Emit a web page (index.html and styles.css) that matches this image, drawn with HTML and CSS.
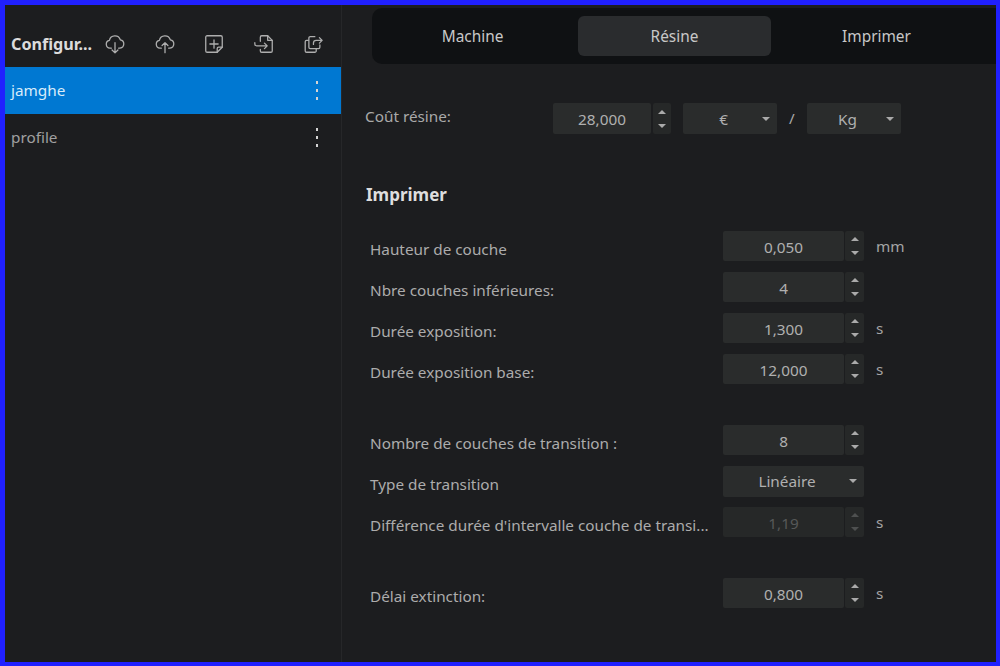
FILE: index.html
```html
<!DOCTYPE html>
<html lang="fr">
<head>
<meta charset="utf-8">
<title>Configuration</title>
<link rel="stylesheet" href="styles.css">
</head>
<body>
<div class="frame">
  <aside class="sidebar">
    <header class="side-head">
      <span class="side-title">Configur...</span>
      <div class="tools">
        <svg class="tool" viewBox="0 0 24 24"><path d="M8 16.500H6.500a4.300 4.300 0 0 1-.6-8.500 6.200 6.200 0 0 1 11.900-.6 4.600 4.600 0 0 1-.3 9.100H16"/><path d="M12 10.500v11M8.800 18.500l3.200 3.200 3.200-3.200"/></svg>
        <svg class="tool" viewBox="0 0 24 24"><path d="M8 16.500H6.500a4.300 4.300 0 0 1-.6-8.500 6.200 6.200 0 0 1 11.900-.6 4.600 4.600 0 0 1-.3 9.100H16"/><path d="M12 21.500v-11M8.800 13.700l3.200-3.200 3.200 3.200"/></svg>
        <svg class="tool" viewBox="0 0 24 24"><path d="M15.500 21H4.500a1.500 1.500 0 0 1-1.500-1.500v-15A1.500 1.500 0 0 1 4.500 3h15A1.500 1.500 0 0 1 21 4.500v11z"/><path d="M15.500 21v-4a1.500 1.500 0 0 1 1.500-1.500h4M12 7.500v9M7.500 12h9"/></svg>
        <svg class="tool" viewBox="0 0 24 24"><path d="M8 9V4.500A1.500 1.500 0 0 1 9.500 3H16l5 5v11.500a1.500 1.500 0 0 1-1.500 1.500h-10A1.500 1.500 0 0 1 8 19.500V18"/><path d="M16 3v5h5"/><path d="M15.500 14H4a2 2 0 0 1-2-2v-1.500M12.500 11l3 3-3 3"/></svg>
        <svg class="tool" viewBox="0 0 24 24"><path d="M7 8H5A1.500 1.500 0 0 0 3.500 9.500v10A1.500 1.500 0 0 0 5 21h9a1.500 1.500 0 0 0 1.500-1.500V17"/><path d="M14 4H9A1.500 1.500 0 0 0 7.500 5.500v10A1.500 1.500 0 0 0 9 17h9a1.500 1.500 0 0 0 1.500-1.500V13"/><path d="M12.500 12.500V11a3 3 0 0 1 3-3H22M19 5l3 3-3 3"/></svg>
      </div>
    </header>
    <ul class="profiles">
      <li class="profile active"><span>jamghe</span><span class="dots"><i></i><i></i><i></i></span></li>
      <li class="profile"><span>profile</span><span class="dots"><i></i><i></i><i></i></span></li>
    </ul>
  </aside>
  <main class="main">
    <nav class="tabs">
      <span class="tab">Machine</span>
      <span class="tab selected">Résine</span>
      <span class="tab">Imprimer</span>
    </nav>
    <section class="cost">
      <span class="cost-label">Coût résine:</span>
      <div class="spin cost-spin"><span class="field">28,000</span><span class="arrows"><b class="up"></b><b class="down"></b></span></div>
      <div class="combo small"><span class="combo-text">€</span><b class="down"></b></div>
      <span class="slash">/</span>
      <div class="combo small"><span class="combo-text">Kg</span><b class="down"></b></div>
    </section>
    <h2 class="heading">Imprimer</h2>
    <section class="group">
      <div class="row"><span class="label">Hauteur de couche</span><div class="spin"><span class="field">0,050</span><span class="arrows"><b class="up"></b><b class="down"></b></span></div><span class="unit">mm</span></div>
      <div class="row"><span class="label">Nbre couches inférieures:</span><div class="spin"><span class="field">4</span><span class="arrows"><b class="up"></b><b class="down"></b></span></div></div>
      <div class="row"><span class="label">Durée exposition:</span><div class="spin"><span class="field">1,300</span><span class="arrows"><b class="up"></b><b class="down"></b></span></div><span class="unit">s</span></div>
      <div class="row"><span class="label">Durée exposition base:</span><div class="spin"><span class="field">12,000</span><span class="arrows"><b class="up"></b><b class="down"></b></span></div><span class="unit">s</span></div>
    </section>
    <section class="group">
      <div class="row"><span class="label">Nombre de couches de transition :</span><div class="spin"><span class="field">8</span><span class="arrows"><b class="up"></b><b class="down"></b></span></div></div>
      <div class="row"><span class="label">Type de transition</span><div class="combo wide"><span class="combo-text">Linéaire</span><b class="down"></b></div></div>
      <div class="row"><span class="label">Différence durée d'intervalle couche de transi...</span><div class="spin disabled"><span class="field">1,19</span><span class="arrows"><b class="up"></b><b class="down"></b></span></div><span class="unit">s</span></div>
    </section>
    <section class="group">
      <div class="row"><span class="label">Délai extinction:</span><div class="spin"><span class="field">0,800</span><span class="arrows"><b class="up"></b><b class="down"></b></span></div><span class="unit">s</span></div>
    </section>
  </main>
</div>
</body>
</html>
```
FILE: styles.css
```css
* { box-sizing: border-box; }
html, body { margin: 0; padding: 0; height: 100%; }
body {
  background: #1c1d1f;
  color: #c4c4c4;
  font-family: "Noto Sans", "Open Sans", sans-serif;
  font-size: 15.3px;
  overflow: hidden;
}
.frame {
  display: flex;
  width: 1000px;
  height: 666px;
  border: 4px solid #2020ff;
  border-top-width: 5px;
  border-left-width: 5px;
  background: #1c1d1f;
}
.sidebar {
  flex: 0 0 337px;
  border-right: 1px solid #262729;
}
.side-head {
  display: flex;
  align-items: center;
  height: 62px;
  padding: 15px 17px 0 6px;
}
.side-title {
  flex: 0 0 83px;
  font-weight: 700;
  font-size: 16.200px;
  color: #dcdcdc;
  white-space: nowrap;
}
.tools {
  flex: 1;
  display: flex;
  justify-content: space-between;
  padding-left: 10px;
}
.tool {
  width: 22px;
  height: 22px;
  fill: none;
  stroke: #aeaeae;
  stroke-width: 1.4;
  stroke-linecap: round;
  stroke-linejoin: round;
}
.profiles { list-style: none; margin: 0; padding: 0; }
.profile {
  display: flex;
  align-items: center;
  justify-content: space-between;
  height: 47px;
  padding: 0 23px 2px 6px;
  color: #a0a0a0;
}
.profile.active {
  background: #0078d2;
  color: #d8ecfa;
}
.dots {
  display: flex;
  flex-direction: column;
  gap: 5px;
  padding-top: 2px;
}
.dots i {
  display: block;
  width: 2px;
  height: 3px;
  background: #d4d4d4;
}
.main {
  flex: 1;
  min-width: 0;
  padding-top: 3px;
}
.tabs {
  display: grid;
  grid-template-columns: repeat(3, 193px);
  column-gap: 9px;
  height: 56px;
  margin-left: 30px;
  padding: 8px 4px;
  background: #0f1113;
  border-radius: 10px 0 0 10px;
}
.tab {
  display: flex;
  align-items: center;
  justify-content: center;
  padding-top: 1px;
  border-radius: 6px;
  color: #c8c8c8;
  font-size: 15.400px;
}
.tab.selected { background: #2a2c2e; }
.cost {
  display: flex;
  align-items: center;
  height: 31px;
  margin: 39px 0 0 23px;
}
.cost-label {
  flex: 0 0 188px;
  padding-bottom: 6px;
  color: #a9a9a9;
}
.spin {
  display: flex;
  gap: 1px;
  width: 141px;
  height: 30px;
  flex: none;
}
.cost-spin { gap: 2px; width: 118px; height: 31px; }
.cost-spin .arrows { flex-basis: 18px; }
.field {
  flex: 1;
  display: flex;
  align-items: center;
  justify-content: center;
  background: #2a2c2c;
  border-radius: 2px;
  color: #b0b0b0;
  padding-top: 1px;
}
.arrows {
  flex: 0 0 19px;
  display: flex;
  flex-direction: column;
  align-items: center;
  justify-content: center;
  gap: 10px;
  background: #262828;
  border-radius: 2px;
}
.up, .down {
  display: block;
  width: 0;
  height: 0;
  border-left: 4px solid transparent;
  border-right: 4px solid transparent;
}
.up { border-bottom: 4px solid #aaaaaa; }
.down { border-top: 4px solid #aaaaaa; }
.combo {
  flex: none;
  display: flex;
  align-items: center;
  height: 31px;
  padding: 0 7px 0 2px;
  background: #2a2c2c;
  border-radius: 2px;
}
.combo-text {
  flex: 1;
  text-align: center;
  color: #b0b0b0;
}
.combo.small { width: 94px; margin-left: 12px; }
.combo.wide { width: 141px; }
.slash {
  flex: 0 0 20px;
  margin: 0 -2px 0 12px;
  padding-bottom: 1px;
  color: #a9a9a9;
}
.slash + .combo { margin-left: 0; }
.heading {
  margin: 49px 0 0 24px;
  font-size: 17px;
  line-height: 24px;
  font-weight: 700;
  color: #dedede;
}
.group {
  display: flex;
  flex-direction: column;
  gap: 11px;
  margin: 41px 0 0 28px;
}
.heading + .group { margin-top: 24px; }
.row {
  display: flex;
  align-items: center;
  height: 30px;
}
.label {
  flex: 0 0 353px;
  padding-top: 5px;
  color: #acacac;
  white-space: nowrap;
}
.unit {
  margin-left: 12px;
  color: #a4a4a4;
}
.disabled .field { color: #565858; background: #262828; }
.disabled .up { border-bottom-color: #4e5050; }
.disabled .down { border-top-color: #4e5050; }
```
